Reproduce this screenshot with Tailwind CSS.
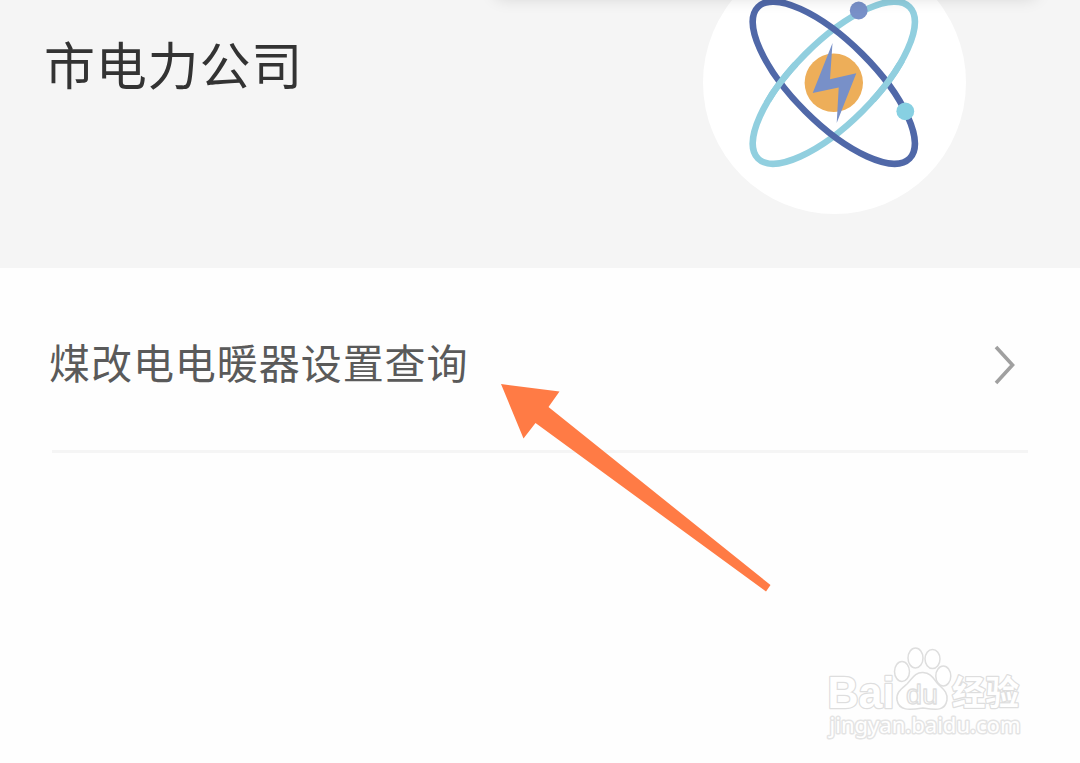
<!DOCTYPE html>
<html lang="zh-CN">
<head>
  <meta charset="UTF-8" />
  <meta name="viewport" content="width=device-width, initial-scale=1" />
  <title>市电力公司</title>
  <script src="https://cdn.jsdelivr.net/npm/@tailwindcss/browser@4"></script>
</head>
<body class="relative h-[763px] overflow-hidden bg-[#fefefe] font-['Noto_Sans_CJK_SC',sans-serif]">

<header class="relative flex h-[268px] items-start justify-between overflow-hidden bg-[#f5f5f5] pl-[44px] pr-[114px]">
  <h1 class="mt-[27px] text-[51px] leading-[72px] tracking-[0.8px] text-[#333333]">市电力公司</h1>
  <div class="-mt-[49px] size-[263px] shrink-0 rounded-full bg-white">
    <svg class="size-full" viewBox="703 -49 263 263" fill="none">
      <defs>
        <clipPath id="sides">
          <rect x="760" y="62" width="38" height="40" />
          <rect x="870" y="62" width="38" height="40" />
        </clipPath>
      </defs>
      <circle cx="833.8" cy="82.8" r="29.2" fill="#edae59" />
      <path d="M832.500 43 L812.700 93 L838.700 87.500 L836.700 123 L856.300 73.300 L830 79.300 Z" fill="#7890c8" />
      <g stroke-width="6.400">
        <ellipse cx="833.8" cy="82.700" rx="107.200" ry="40.400" transform="rotate(-45 833.8 82.700)" stroke="#91cfdf" />
        <ellipse cx="833.8" cy="82.700" rx="107.200" ry="40.400" transform="rotate(45 833.8 82.700)" stroke="#5068a8" />
        <!-- light orbit passes over the dark one on both sides -->
        <g clip-path="url(#sides)">
          <ellipse cx="833.8" cy="82.700" rx="107.200" ry="40.400" transform="rotate(-45 833.8 82.700)" stroke="#91cfdf" />
        </g>
      </g>
      <circle cx="858.7" cy="10.500" r="8.900" fill="#7890c8" />
      <circle cx="905.3" cy="111.300" r="8.900" fill="#87d0e2" />
    </svg>
  </div>
  <!-- shadow of the card above -->
  <div class="absolute -top-[22px] left-[496px] h-[16px] w-[540px] rounded-lg shadow-[0_3px_16px_2px_rgba(0,0,0,0.13)]"></div>
</header>

<main class="px-[52px]">
  <a class="flex h-[185px] items-center justify-between border-b-[3px] border-[#f5f5f5] pr-[12px]">
    <span class="-ml-[3px] mt-[3px] text-[41px] leading-[60px] tracking-[0.95px] text-[#5a5a5a]">煤改电电暖器设置查询</span>
    <svg class="mt-[12px] h-[42px] w-[24px]" viewBox="0 0 24 42" fill="none" stroke="#a0a0a0" stroke-width="3.600">
      <path d="M4 3 L20.500 21 L4 39" />
    </svg>
  </a>
</main>

<!-- pointer -->
<svg class="absolute left-[500px] top-[383px] h-[210px] w-[272px]" viewBox="500 383 272 210">
  <path d="M501 384 L559.500 391.500 L548.500 407 L770.500 585 L766 591.500 L535.500 423 L523.500 438.500 Z" fill="#ff7b45" />
</svg>

<!-- watermark -->
<svg class="absolute left-[815px] top-[635px] h-[115px] w-[220px]" viewBox="0 0 220 115" fill="#ffffff" stroke="#dedede" stroke-width="1.500" stroke-linejoin="round">
  <g font-family="Liberation Sans, sans-serif" font-weight="700">
    <text x="12.500" y="72.500" font-size="44" paint-order="stroke" stroke-width="2.500" textLength="67" lengthAdjust="spacingAndGlyphs">Bai</text>
    <ellipse cx="87" cy="36.500" rx="7.500" ry="10" />
    <ellipse cx="100.500" cy="23" rx="7.500" ry="10" />
    <ellipse cx="117.500" cy="24" rx="7.500" ry="9.500" />
    <ellipse cx="128.300" cy="41" rx="7.500" ry="10" />
    <path d="M108 37.500 C100 37 97 44 92 49 C85 55 81 58 82 65 C84 76 94 75 108 73 C122 75 130 76 132 65 C133 57 128 54 123 49 C118 43 116 38 108 37.500 Z" />
    <text x="91" y="68.500" font-size="27" font-weight="400" stroke-width="1.300" textLength="32" lengthAdjust="spacingAndGlyphs">du</text>
  </g>
  <text x="137" y="70" font-family="Noto Sans CJK SC, sans-serif" font-size="34" font-weight="700" paint-order="stroke" stroke-width="2.500" textLength="67" lengthAdjust="spacingAndGlyphs">经验</text>
  <text x="14.500" y="98" font-family="Noto Sans, sans-serif" font-size="22" font-weight="400" paint-order="stroke" stroke="#e4e4e4" stroke-width="3" textLength="191" lengthAdjust="spacingAndGlyphs">jingyan.baidu.com</text>
</svg>

</body>
</html>
